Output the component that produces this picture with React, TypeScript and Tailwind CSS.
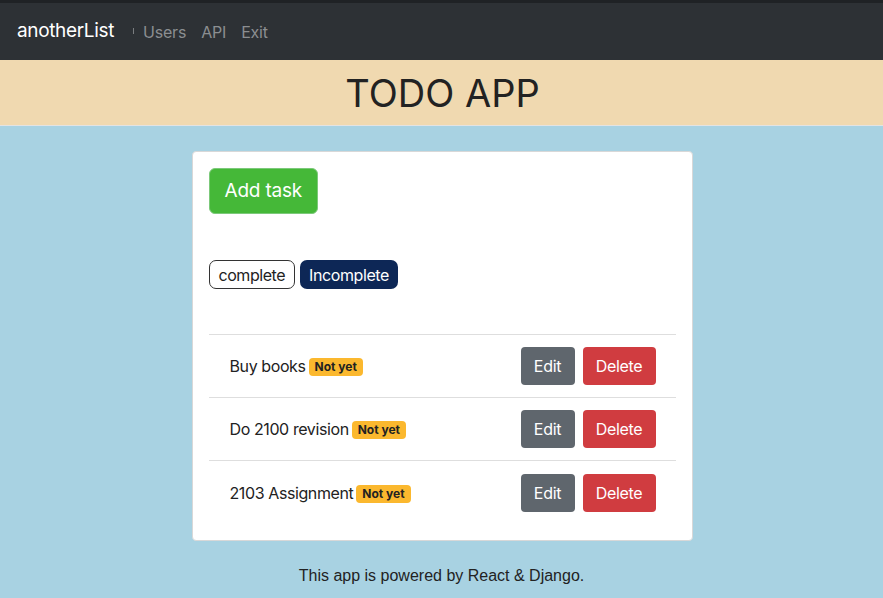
import React from "react";

const tasks = ["Buy books", "Do 2100 revision", "2103 Assignment"];

export default function App() {
  return (
    <div className="min-h-[598px] bg-[#a8d2e2] font-['Inter','Noto_Sans',sans-serif]">
      <nav className="h-[60px] bg-[#2d3135] border-t-[3px] border-[#1f2225] flex items-center px-[17px]">
        <span className="text-[19px] text-white tracking-[-0.35px]">anotherList</span>
        <span className="ml-[19px] mr-[9px] w-px h-[6px] bg-[#7a7d80] -mt-[2px]"></span>
        <span className="text-[16px] text-[#8b8e91] tracking-[-0.2px]">Users</span>
        <span className="ml-[15px] text-[16px] text-[#8b8e91] tracking-[-0.2px]">API</span>
        <span className="ml-[15px] text-[16px] text-[#8b8e91] tracking-[-0.2px]">Exit</span>
      </nav>
      <header className="h-[66px] bg-[#f0d9b0] border-b border-[#e3e3e3] flex items-center justify-center">
        <h1 className="text-[38px] text-[#222] leading-none pl-[2px]">TODO APP</h1>
      </header>
      <main className="pt-[25px] flex flex-col items-center">
        <div className="w-[501px] bg-white rounded-[4px] border border-[#d8d8d8] px-[16px] pt-[16px] pb-[16px] ml-[1px]">
          <button className="h-[46px] px-[15px] bg-[#45b838] text-white text-[19px] rounded-[6px] border border-[#7cc97a] tracking-[-0.2px]">
            Add task
          </button>
          <div className="mt-[46px] flex gap-[5px]">
            <button className="h-[29px] px-[9px] border border-[#333] rounded-[7px] text-[16px] text-[#222] bg-white tracking-[-0.45px]">complete</button>
            <button className="h-[29px] px-[9px] bg-[#0d2756] rounded-[7px] text-[16px] text-white tracking-[-0.4px]">Incomplete</button>
          </div>
          <ul className="mt-[45px] border-t border-[#dedede]">
            {tasks.map((t, i) => (
              <li
                key={t}
                className={`h-[63px] flex items-center justify-between pl-[21px] pr-[20px] ${i < tasks.length - 1 ? "border-b border-[#dedede]" : ""}`}
              >
                <span className="text-[16px] text-[#222] flex items-center tracking-[-0.4px]">
                  {t}
                  <span className="ml-[3px] bg-[#fbb82e] text-[#222] text-[12px] font-bold px-[6px] h-[18px] flex items-center rounded-[4px] mt-[2px] tracking-normal">
                    Not yet
                  </span>
                </span>
                <span className="flex gap-[8px]">
                  <button className="h-[38px] w-[54px] bg-[#5f666d] text-white text-[16px] rounded-[4px] tracking-[-0.3px]">Edit</button>
                  <button className="h-[38px] w-[73px] bg-[#d03c40] text-white text-[16px] rounded-[4px] tracking-[-0.3px]">Delete</button>
                </span>
              </li>
            ))}
          </ul>
        </div>
        <p className="mt-[23px] text-[16px] text-[#222] font-['Liberation_Sans',Arial,sans-serif]">
          This app is powered by React &amp; Django.
        </p>
      </main>
    </div>
  );
}
